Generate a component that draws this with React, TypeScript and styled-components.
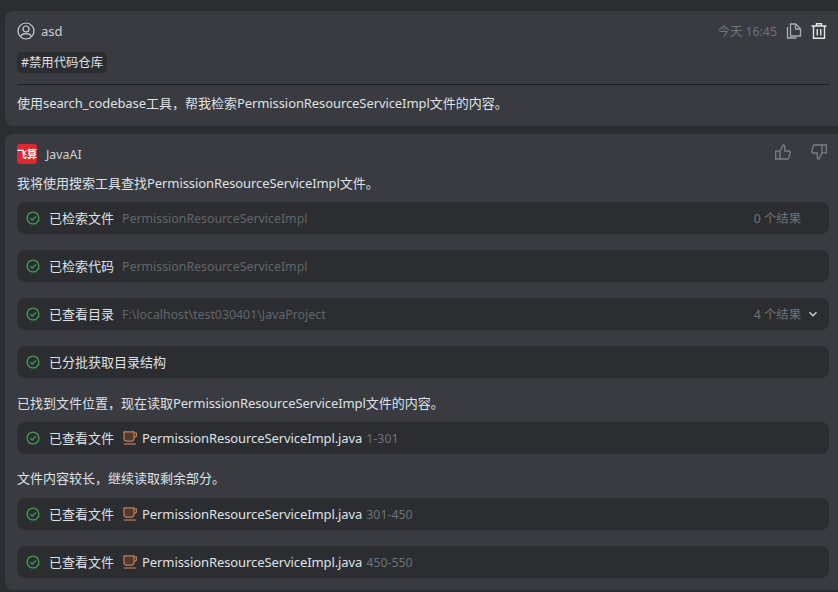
import React from 'react';
import styled, { createGlobalStyle } from 'styled-components';

const GlobalStyle = createGlobalStyle`
  html, body {
    margin: 0;
    padding: 0;
    background: #2b2d30;
    overflow: hidden;
  }
  body {
    font-family: "Noto Sans", "Noto Sans CJK SC", sans-serif;
    font-size: 13px;
    color: #dfe1e5;
  }
`;

const Page = styled.div`
  width: 838px;
  height: 592px;
  box-sizing: border-box;
  padding: 11px 0 0 5px;
  display: flex;
  flex-direction: column;
  gap: 8px;
  overflow: hidden;
`;

const Card = styled.section<{ $bottom: number }>`
  background: #393b40;
  border-radius: 8px 0 0 8px;
  box-sizing: border-box;
  padding: 9px 9px ${(p) => p.$bottom}px 12px;
  display: flex;
  flex-direction: column;
`;

const Header = styled.div<{ $right: number }>`
  height: 22px;
  padding-right: ${(p) => p.$right}px;
  display: flex;
  align-items: center;
`;

const Name = styled.span`
  margin-left: 6px;
  color: #ced0d6;
`;

const Spacer = styled.div`
  flex: 1;
`;

const Time = styled.span`
  color: #6f737a;
  font-size: 12.35px;
`;

const IconButton = styled.span<{ $gap: number; $lift?: number }>`
  display: inline-flex;
  margin-left: ${(p) => p.$gap}px;
  margin-bottom: ${(p) => p.$lift ?? 0}px;
`;

const Tag = styled.span`
  align-self: flex-start;
  margin-top: 10px;
  height: 21px;
  line-height: 21px;
  padding: 0 4px;
  background: #2b2d30;
  border-radius: 5px;
  font-size: 12.35px;
`;

const Divider = styled.hr`
  border: 0;
  border-top: 1px solid #1e1f22;
  margin: 11px 0 0;
  width: 100%;
`;

const Text = styled.p<{ $height: number; $top?: number; $lift?: number }>`
  margin: ${(p) => p.$top ?? 0}px 0 0;
  height: ${(p) => p.$height}px;
  line-height: ${(p) => p.$height - (p.$lift ?? 0)}px;
`;

// Noto runs a little wider than the reference's latin face
const Latin = styled.span`
  letter-spacing: -0.09px;
`;

const Rows = styled.div`
  display: flex;
  flex-direction: column;
  gap: 16px;
`;

const Row = styled.div`
  height: 32px;
  background: #2b2d30;
  border-radius: 8px;
  display: flex;
  align-items: center;
  padding: 0 11px 0 9px;
`;

const Label = styled.span`
  margin-left: 9px;
  padding-bottom: 2px;
`;

const Detail = styled.span`
  margin-left: 8px;
  color: #63666c;
  font-size: 12.35px;
`;

const CupSlot = styled.span`
  margin-left: 9px;
  display: inline-flex;
`;

const FileName = styled(Latin)`
  margin-left: 5px;
`;

const Range = styled.span`
  margin-left: 4px;
  color: #6f737a;
  font-size: 12.35px;
`;

const Result = styled.span<{ $right: number }>`
  margin-left: auto;
  margin-right: ${(p) => p.$right}px;
  color: #6f737a;
  font-size: 12.35px;
`;

const Logo = styled.span`
  width: 20px;
  height: 20px;
  border-radius: 3px;
  background: #e0262e;
  color: #fff;
  font-size: 10px;
  font-weight: 700;
  line-height: 20px;
  text-align: center;
  white-space: nowrap;
`;

const AiName = styled.span`
  margin-left: 9px;
  color: #ced0d6;
  font-size: 12.35px;
`;

const User = () => (
  <svg width="18" height="18" viewBox="0 0 18 18" fill="none" stroke="#ced0d6" strokeWidth="1.2">
    <circle cx="9" cy="9" r="8" />
    <circle cx="9" cy="7" r="3" />
    <path d="M3.6 14.6c.6-2 2.4-3 5.4-3s4.8 1 5.4 3" />
  </svg>
);

const Copy = () => (
  <svg width="16" height="16" viewBox="0 0 16 16" fill="none" stroke="#a8adb5" strokeWidth="1.3">
    <path d="M4.500 1h5.200l4.800 4.800v7.200h-10z" />
    <path d="M9.500 1v5h5" />
    <path d="M1.500 4v11h9" />
  </svg>
);

const Trash = () => (
  <svg width="18" height="18" viewBox="0 0 18 18" fill="none" stroke="#e6e6e6" strokeWidth="1.4">
    <path d="M1.500 4h15M6.500 4V1.700h5V4M3.500 4v12.300h11V4M7.300 7v6.500M10.700 7v6.500" />
  </svg>
);

const ThumbUp = () => (
  <svg width="16" height="16" viewBox="0 0 16 16" fill="none" stroke="#7c7f85" strokeWidth="1.3">
    <path d="M5 7.200H.7v7.800h12c.6 0 1-.4 1.100-1l1.400-5.700c.1-.7-.4-1.300-1.100-1.300H9.800V3c0-1-.7-2-1.700-2L5 7.200V15" />
  </svg>
);

const ThumbDown = () => (
  <svg width="16" height="16" viewBox="0 0 16 16" fill="none" stroke="#7c7f85" strokeWidth="1.3">
    <path d="M11 8.800h4.300V1h-12c-.6 0-1 .4-1.100 1L.8 7.700c-.1.700.4 1.300 1.100 1.300h4.300V13c0 1 .7 2 1.700 2L11 8.800V1" />
  </svg>
);

const Check = () => (
  <svg width="14" height="14" viewBox="0 0 14 14" fill="none" stroke="#499c54" strokeWidth="1.3">
    <circle cx="7" cy="7" r="5.900" />
    <path d="M4.300 7.100l2 2 3.500-3.700" />
  </svg>
);

const Cup = () => (
  <svg width="14" height="14" viewBox="0 0 14 14" fill="none" stroke="#c77d55" strokeWidth="1.2">
    <path d="M1 .8h10v6.800c0 1.500-1 2.500-2.500 2.500h-5C2 10.100 1 9.100 1 7.600z" fill="#4d3a30" />
    <path d="M11 2h2.400v2.600c0 1-.8 1.600-2.400 1.600" />
    <path d="M.8 13h12" />
  </svg>
);

const Chevron = () => (
  <svg width="10" height="10" viewBox="0 0 10 10" fill="none" stroke="#ced0d6" strokeWidth="1.4">
    <path d="M1.500 3.300L5 6.800l3.500-3.500" />
  </svg>
);

const file = 'PermissionResourceServiceImpl';

const FileRow: React.FC<{ range: string }> = ({ range }) => (
  <Row>
    <Check />
    <Label>已查看文件</Label>
    <CupSlot><Cup /></CupSlot>
    <FileName>{file}.java</FileName>
    <Range>{range}</Range>
  </Row>
);

const App: React.FC = () => (
  <Page>
    <GlobalStyle />
    <Card $bottom={5}>
      <Header $right={1}>
        <User />
        <Name>asd</Name>
        <Spacer />
        <Time>今天 16:45</Time>
        <IconButton $gap={9}><Copy /></IconButton>
        <IconButton $gap={8}><Trash /></IconButton>
      </Header>
      <Tag>#禁用代码仓库</Tag>
      <Divider />
      <Text $height={36}>
        使用<Latin>search_codebase</Latin>工具，帮我检索<Latin>{file}</Latin>文件的内容。
      </Text>
    </Card>
    <Card $bottom={12}>
      <Header $right={2}>
        <Logo>飞算</Logo>
        <AiName>JavaAI</AiName>
        <Spacer />
        <IconButton $gap={0} $lift={4}><ThumbUp /></IconButton>
        <IconButton $gap={20} $lift={4}><ThumbDown /></IconButton>
      </Header>
      <Text $height={37}>我将使用搜索工具查找<Latin>{file}</Latin>文件。</Text>
      <Rows>
        <Row>
          <Check />
          <Label>已检索文件</Label>
          <Detail>{file}</Detail>
          <Result $right={17}>0 个结果</Result>
        </Row>
        <Row>
          <Check />
          <Label>已检索代码</Label>
          <Detail>{file}</Detail>
        </Row>
        <Row>
          <Check />
          <Label>已查看目录</Label>
          <Detail>F:\localhost\test030401\JavaProject</Detail>
          <Result $right={7}>4 个结果</Result>
          <Chevron />
        </Row>
        <Row>
          <Check />
          <Label>已分批获取目录结构</Label>
        </Row>
      </Rows>
      <Text $height={38} $top={6}>已找到文件位置，现在读取<Latin>{file}</Latin>文件的内容。</Text>
      <FileRow range="1-301" />
      <Text $height={38} $top={6} $lift={2}>文件内容较长，继续读取剩余部分。</Text>
      <Rows>
        <FileRow range="301-450" />
        <FileRow range="450-550" />
      </Rows>
    </Card>
  </Page>
);

export default App;
